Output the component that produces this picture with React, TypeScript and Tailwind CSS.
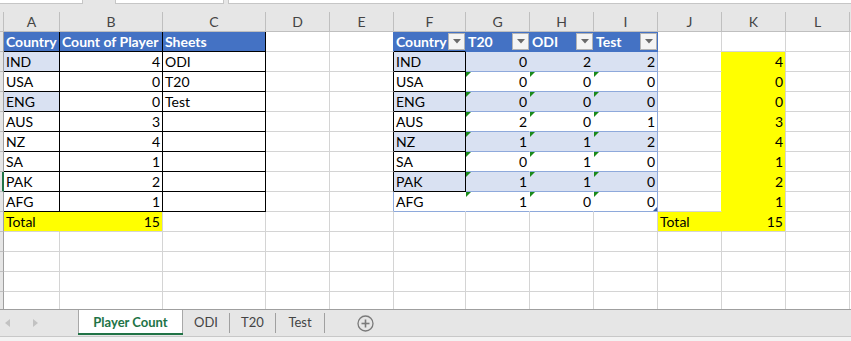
import React from 'react';

type Cell = {
  t?: string;
  al?: 'l' | 'r';
  bg: string;
  r: string;
  b: string;
  bold?: boolean;
  white?: boolean;
  tri?: boolean;
  dd?: boolean;
  handle?: boolean;
};

const bgC: Record<string, string> = {
  blue: 'bg-[#4472c4]',
  lb: 'bg-[#d9e1f2]',
  y: 'bg-[#ffff00]',
  w: 'bg-white',
};
const rC: Record<string, string> = {
  g: 'border-r-[#d4d4d4]',
  k: 'border-r-black',
  blue: 'border-r-[#4472c4]',
  lb: 'border-r-[#d9e1f2]',
  tb: 'border-r-[#8ea9db]',
  y: 'border-r-[#ffff00]',
  w: 'border-r-white',
};
const bC: Record<string, string> = {
  g: 'border-b-[#d4d4d4]',
  k: 'border-b-black',
  blue: 'border-b-[#4472c4]',
  tb: 'border-b-[#8ea9db]',
  y: 'border-b-[#ffff00]',
};

const countries = ['IND', 'USA', 'ENG', 'AUS', 'NZ', 'SA', 'PAK', 'AFG'];
const counts = ['4', '0', '0', '3', '4', '1', '2', '1'];
const sheets = ['ODI', 'T20', 'Test', '', '', '', '', ''];
const t20 = ['0', '0', '0', '2', '1', '0', '1', '1'];
const odi = ['2', '0', '0', '0', '1', '1', '1', '0'];
const test = ['2', '0', '0', '1', '2', '0', '0', '0'];
const kvals = [...counts, '15'];
const letters = ['A', 'B', 'C', 'D', 'E', 'F', 'G', 'H', 'I', 'J', 'K', 'L', ''];

function getCell(r: number, c: number): Cell {
  const cell: Cell = { bg: 'w', r: 'g', b: 'g' };
  const i = r - 2;
  if (c <= 2 && r >= 1 && r <= 9) {
    cell.r = 'k';
    cell.b = 'k';
    if (r === 1) {
      cell.bg = 'blue';
      cell.bold = true;
      cell.white = true;
      cell.t = ['Country', 'Count of Player', 'Sheets'][c];
    } else {
      if (c === 0) {
        cell.t = countries[i];
        if (r === 2 || r === 4) cell.bg = 'lb';
      }
      if (c === 1) {
        cell.t = counts[i];
        cell.al = 'r';
      }
      if (c === 2) cell.t = sheets[i];
    }
  }
  if (r === 10 && c <= 1) {
    cell.bg = 'y';
    if (c === 0) {
      cell.t = 'Total';
      cell.r = 'y';
    } else {
      cell.t = '15';
      cell.al = 'r';
    }
  }
  if (c === 4) {
    if (r === 1) cell.r = 'blue';
    else if (r >= 2 && r <= 8) cell.r = 'k';
    else if (r === 9) cell.r = 'tb';
  }
  if (c === 5 && r >= 1 && r <= 9) {
    if (r === 1) {
      cell.bg = 'blue';
      cell.t = 'Country';
      cell.bold = true;
      cell.white = true;
      cell.dd = true;
      cell.r = 'blue';
      cell.b = 'k';
    } else if (r <= 8) {
      cell.t = countries[i];
      cell.bg = r % 2 === 0 ? 'lb' : 'w';
      cell.r = 'k';
      cell.b = 'k';
    } else {
      cell.t = 'AFG';
      cell.r = 'w';
      cell.b = 'tb';
    }
  }
  if (c >= 6 && c <= 8 && r >= 1 && r <= 9) {
    if (r === 1) {
      cell.bg = 'blue';
      cell.t = ['T20', 'ODI', 'Test'][c - 6];
      cell.bold = true;
      cell.white = true;
      cell.dd = true;
      cell.r = 'blue';
      cell.b = 'blue';
    } else {
      const band = r % 2 === 0;
      cell.bg = band ? 'lb' : 'w';
      cell.t = [t20, odi, test][c - 6][i];
      cell.al = 'r';
      cell.r = c === 8 ? 'tb' : band ? 'lb' : 'w';
      cell.b = 'tb';
      if (r >= 3) cell.tri = true;
      if (r === 9 && c === 8) cell.handle = true;
    }
  }
  if (c === 9 && r >= 2 && r <= 9) cell.r = 'y';
  if (c === 9 && r === 10) {
    cell.bg = 'y';
    cell.t = 'Total';
    cell.r = 'y';
  }
  if (c === 10 && r >= 2 && r <= 10) {
    cell.bg = 'y';
    cell.t = kvals[i];
    cell.al = 'r';
    cell.b = r === 10 ? 'g' : 'y';
  }
  return cell;
}

function DropDown() {
  return (
    <div className="absolute right-0 top-[1px] w-[17px] h-[17px] bg-[#f4f4f4] border border-[#b4b4b4] flex items-center justify-center">
      <svg width="8" height="5" viewBox="0 0 8 5">
        <polygon points="0,0 8,0 4,4.5" fill="#6a6a6a" />
      </svg>
    </div>
  );
}

function CellView({ cell }: { cell: Cell }) {
  return (
    <div
      className={`relative border-r border-b ${bgC[cell.bg]} ${rC[cell.r]} ${bC[cell.b]} px-[2px] leading-[19px] text-[14px] whitespace-nowrap ${
        cell.al === 'r' ? 'text-right' : 'text-left'
      } ${cell.bold ? 'font-bold' : 'font-normal'} ${cell.white ? 'text-white' : 'text-black'}`}
    >
      {cell.tri && (
        <svg className="absolute left-0 top-0" width="5" height="5" viewBox="0 0 5 5">
          <polygon points="0,0 5,0 0,5" fill="#1a8a1a" />
        </svg>
      )}
      {cell.t}
      {cell.dd && <DropDown />}
      {cell.handle && (
        <svg className="absolute right-0 bottom-0" width="4" height="4" viewBox="0 0 4 4">
          <polygon points="4,0 4,4 0,4" fill="#3a5fa8" />
        </svg>
      )}
    </div>
  );
}

export default function App() {
  const rows = Array.from({ length: 14 }, (_, k) => k + 1);
  const cols = Array.from({ length: 13 }, (_, k) => k);
  return (
    <div className="w-[851px] h-[341px] overflow-hidden bg-white font-[Lato,sans-serif] flex flex-col">
      {/* top strip */}
      <div className="h-[4px] flex shrink-0">
        <div className="w-[83px] bg-white border-b border-r border-[#c6c6c6]" />
        <div className="w-[32px] bg-[#e6e6e6]" />
        <div className="w-[109px] bg-white border-b border-l border-r border-[#c6c6c6]" />
        <div className="w-[4px] bg-[#e6e6e6]" />
        <div className="flex-1 bg-white border-b border-l border-[#c6c6c6]" />
      </div>
      <div className="h-[8px] bg-[#e6e6e6] shrink-0" />
      {/* sheet */}
      <div className="h-[297px] overflow-hidden shrink-0">
        <div className="grid grid-cols-[4px_56px_103px_103px_64px_64px_72px_64px_64px_64px_64px_64px_64px_1fr] auto-rows-[20px]">
          <div className="bg-[#e6e6e6] border-r border-b border-[#bfbfbf]" />
          {cols.map((c) => (
            <div
              key={`h${c}`}
              className="bg-[#e6e6e6] border-r border-b border-[#bfbfbf] text-center text-[14px] leading-[19px] text-[#444444]"
            >
              {letters[c]}
            </div>
          ))}
          {rows.map((r) => (
            <React.Fragment key={r}>
              <div
                className={`bg-[#e6e6e6] border-b border-b-[#bfbfbf] ${
                  r === 8 ? 'border-r-2 border-r-[#217346]' : 'border-r border-r-[#9f9f9f]'
                }`}
              />
              {cols.map((c) => (
                <CellView key={`${r}-${c}`} cell={getCell(r, c)} />
              ))}
            </React.Fragment>
          ))}
        </div>
      </div>
      {/* tab bar */}
      <div className="h-[28px] shrink-0 bg-[#e6e6e6] border-t border-b border-t-[#9f9f9f] border-b-[#c8c8c8] flex items-stretch">
        <div className="w-[78px] flex items-center">
          <svg className="ml-[5px]" width="5" height="8" viewBox="0 0 5 8">
            <polygon points="5,0 5,8 0,4" fill="#c2c2c2" />
          </svg>
          <svg className="ml-[23px]" width="5" height="8" viewBox="0 0 5 8">
            <polygon points="0,0 0,8 5,4" fill="#c2c2c2" />
          </svg>
        </div>
        <div className="relative w-[105px] bg-white border-l border-r border-[#a8a8a8] flex items-center justify-center text-[13px] font-bold text-[#217346] mb-[1px]">
          Player Count
          <div className="absolute left-[-1px] right-[-1px] bottom-0 h-[2px] bg-[#217346]" />
        </div>
        <div className="w-[46px] flex items-center justify-center text-[13px] text-[#444444]">ODI</div>
        <div className="w-px h-[20px] self-center bg-[#a0a0a0]" />
        <div className="w-[45px] flex items-center justify-center text-[13px] text-[#444444]">T20</div>
        <div className="w-px h-[20px] self-center bg-[#a0a0a0]" />
        <div className="w-[48px] flex items-center justify-center text-[13px] text-[#444444]">Test</div>
        <div className="w-px h-[20px] self-center bg-[#a0a0a0]" />
        <div className="ml-[32px] flex items-center">
          <svg width="17" height="17" viewBox="0 0 17 17">
            <circle cx="8.5" cy="8.5" r="7.5" fill="none" stroke="#7a7a7a" strokeWidth="1.3" />
            <line x1="8.5" y1="4.5" x2="8.5" y2="12.5" stroke="#7a7a7a" strokeWidth="1.6" />
            <line x1="4.5" y1="8.5" x2="12.5" y2="8.5" stroke="#7a7a7a" strokeWidth="1.6" />
          </svg>
        </div>
      </div>
      <div className="flex-1 bg-[#f3f3f3]" />
    </div>
  );
}
